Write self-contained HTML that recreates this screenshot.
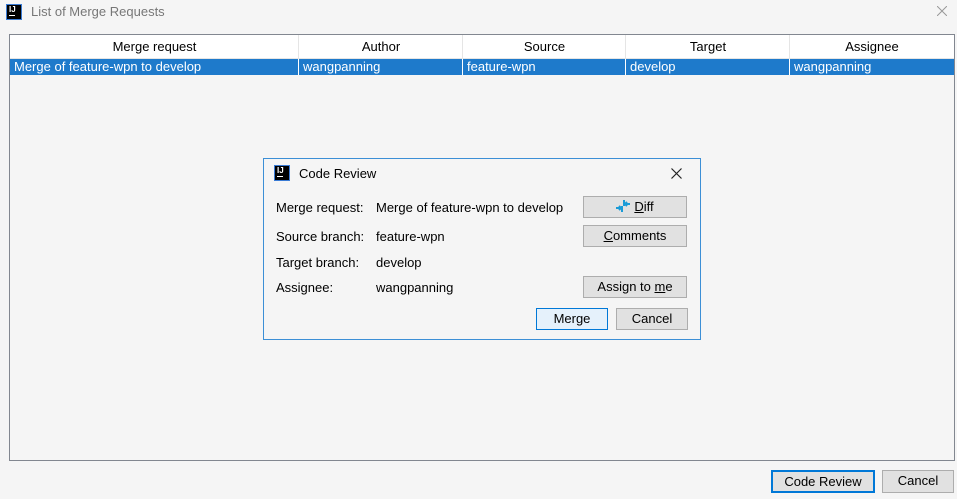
<!DOCTYPE html>
<html><head><meta charset="utf-8"><style>
*{box-sizing:border-box;margin:0;padding:0}
body{width:957px;height:499px;background:#f5f5f5;font-family:"Liberation Sans","Noto Sans CJK SC",sans-serif;font-size:13px;color:#000;position:relative;overflow:hidden}
.abs{position:absolute}
.logo{width:16px;height:16px;background:#000;border:1px solid #3a7bd5;color:#fff;font-size:8px;font-weight:bold;line-height:9px;padding-left:2px}
.logo i{display:block;width:6px;height:1px;background:#fff;position:absolute;left:2px;bottom:3px}
.btn{position:absolute;background:#e1e1e1;border:1px solid #adadad;text-align:center;line-height:20px;font-size:13px}
.cell{position:absolute;top:0;height:100%;padding-left:4px;white-space:nowrap;line-height:16px}
u{text-decoration:underline}
</style></head><body>
<div class="abs logo" style="left:6px;top:4px"><span>IJ</span><i></i></div>
<div class="abs" style="left:31px;top:4px;color:#777;font-size:13px">List of Merge Requests</div>
<svg class="abs" style="left:937px;top:6px" width="10" height="10"><path d="M0 0L10 10M10 0L0 10" stroke="#999" stroke-width="1"/></svg>

<div class="abs" style="left:9px;top:34px;width:946px;height:427px;border:1px solid #828790;background:#f5f5f5">
 <div class="abs" style="left:0;top:0;width:944px;height:24px;background:#fff;border-bottom:1px solid #e5e5e5">
  <div class="abs" style="left:0;width:289px;top:4px;text-align:center">Merge request</div>
  <div class="abs" style="left:288px;top:0;width:1px;height:24px;background:#e5e5e5"></div>
  <div class="abs" style="left:289px;width:164px;top:4px;text-align:center">Author</div>
  <div class="abs" style="left:452px;top:0;width:1px;height:24px;background:#e5e5e5"></div>
  <div class="abs" style="left:453px;width:163px;top:4px;text-align:center">Source</div>
  <div class="abs" style="left:615px;top:0;width:1px;height:24px;background:#e5e5e5"></div>
  <div class="abs" style="left:616px;width:164px;top:4px;text-align:center">Target</div>
  <div class="abs" style="left:779px;top:0;width:1px;height:24px;background:#e5e5e5"></div>
  <div class="abs" style="left:780px;width:164px;top:4px;text-align:center">Assignee</div>
 </div>
 <div class="abs" style="left:0;top:24px;width:944px;height:16px;background:#1e7acb;color:#fff">
  <div class="cell" style="left:0">Merge of feature-wpn to develop</div>
  <div class="cell" style="left:288px;border-left:1px solid #fff">wangpanning</div>
  <div class="cell" style="left:452px;border-left:1px solid #fff">feature-wpn</div>
  <div class="cell" style="left:615px;border-left:1px solid #fff">develop</div>
  <div class="cell" style="left:779px;border-left:1px solid #fff">wangpanning</div>
 </div>
</div>

<div class="abs" style="left:263px;top:158px;width:438px;height:182px;border:1px solid #3c8fd6;background:#f5f5f5">
 <div class="abs logo" style="left:10px;top:6px"><span>IJ</span><i></i></div>
 <div class="abs" style="left:35px;top:7px">Code Review</div>
 <svg class="abs" style="left:407px;top:9px" width="11" height="11"><path d="M0.5 0.5L10.5 10.5M10.5 0.5L0.5 10.5" stroke="#222" stroke-width="1.2"/></svg>
 <div class="abs" style="left:12px;top:41px">Merge request:</div>
 <div class="abs" style="left:112px;top:41px">Merge of feature-wpn to develop</div>
 <div class="abs" style="left:12px;top:70px">Source branch:</div>
 <div class="abs" style="left:112px;top:70px">feature-wpn</div>
 <div class="abs" style="left:12px;top:96px">Target branch:</div>
 <div class="abs" style="left:112px;top:96px">develop</div>
 <div class="abs" style="left:12px;top:121px">Assignee:</div>
 <div class="abs" style="left:112px;top:121px">wangpanning</div>
 <div class="btn" style="left:319px;top:37px;width:104px;height:22px"><svg width="14" height="14" viewBox="0 0 14 14" style="vertical-align:-2px;margin-right:4px"><path d="M0 9h5M3 7l2 2-2 2M6 7v6" stroke="#1a9bd7" stroke-width="2" fill="none"/><path d="M14 5h-5M11 3l-2 2 2 2M8 1v6" stroke="#1a9bd7" stroke-width="2" fill="none"/></svg><u>D</u>iff</div>
 <div class="btn" style="left:319px;top:66px;width:104px;height:22px"><u>C</u>omments</div>
 <div class="btn" style="left:319px;top:117px;width:104px;height:22px">Assign to <u>m</u>e</div>
 <div class="btn" style="left:272px;top:149px;width:72px;height:22px;background:#e5f1fb;border-color:#0078d7">Merge</div>
 <div class="btn" style="left:352px;top:149px;width:72px;height:22px">Cancel</div>
</div>

<div class="btn" style="left:771px;top:470px;width:104px;height:23px;border:2px solid #0078d7;line-height:19px">Code Review</div>
<div class="btn" style="left:882px;top:470px;width:72px;height:23px">Cancel</div>
</body></html>
